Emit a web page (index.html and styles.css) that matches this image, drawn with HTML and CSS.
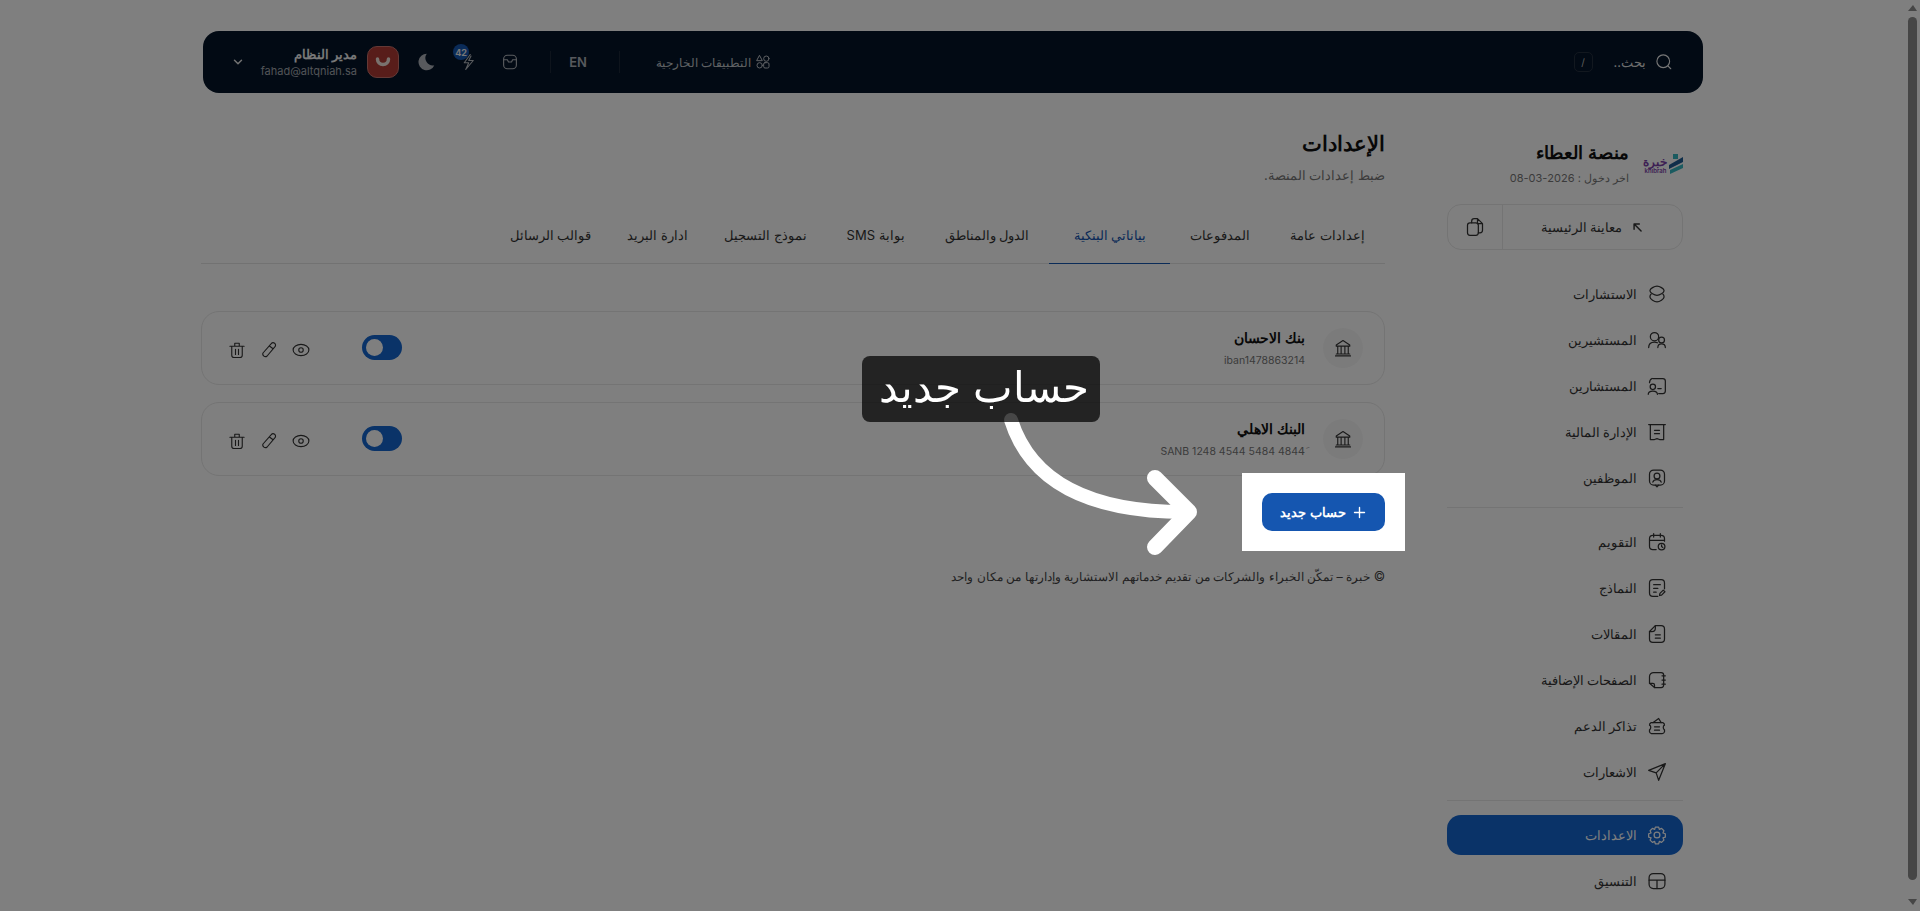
FILE: index.html
```html
<!DOCTYPE html>
<html lang="ar" dir="rtl">
<head>
  <meta charset="UTF-8">
  <meta name="viewport" content="width=device-width, initial-scale=1.0">
  <title>الإعدادات</title>
  <link rel="stylesheet" href="styles.css">
</head>
<body>

  <div class="page">
    <!-- Top bar -->
    <header class="topbar">
      <div class="search">
        <svg class="ic search-ic" viewBox="0 0 24 24"><circle cx="11" cy="11" r="8.5"/><path d="M17.5 17.5 21 21"/></svg>
        <span class="search-text">بحث..</span>
        <kbd class="search-key">/</kbd>
      </div>
      <div class="top-tools">
        <div class="apps">
          <svg class="ic apps-ic" viewBox="0 0 24 24"><circle cx="17" cy="7" r="4"/><path d="M7 2.5 11 10H3z"/><circle cx="7" cy="17" r="4"/><rect x="13" y="13" width="8" height="8" rx="2"/></svg>
          <span>التطبيقات الخارجية</span>
        </div>
        <span class="top-sep"></span>
        <span class="lang">EN</span>
        <span class="top-sep"></span>
        <svg class="ic top-ic box-ic" viewBox="0 0 24 24"><rect x="3.5" y="3" width="17" height="18" rx="5"/><path d="M3.5 9h5l1.500 3h4l1.500-3h5"/></svg>
        <div class="bolt">
          <svg class="ic top-ic" viewBox="0 0 24 24"><path d="M15 2 7 13h6l-4 9 10-12h-6l3-6"/></svg>
          <span class="bolt-badge">42</span>
        </div>
        <svg class="moon" viewBox="0 0 24 24"><path d="M13 1a11 11 0 1 0 10 15.500A10 10 0 0 1 13 1z"/></svg>
        <div class="avatar">
          <svg class="avatar-smile" viewBox="0 0 16 10"><path d="M2.500 2a5.500 5.500 0 0 0 11 0"/></svg>
        </div>
        <div class="user">
          <div class="user-name">مدير النظام</div>
          <div class="user-mail">fahad@altqniah.sa</div>
        </div>
        <svg class="ic chevron" viewBox="0 0 24 24"><path d="m6 9 6 6 6-6"/></svg>
      </div>
    </header>

    <div class="layout">
      <!-- Sidebar -->
      <aside class="sidebar">
        <div class="brand">
          <div class="logo">
            <svg class="logo-mark" viewBox="0 0 14 20"><path class="logo-teal" d="M4 0h5v5H4z"/><path class="logo-navy" d="M14 3v5L0 15v-4z"/><path class="logo-teal" d="M14 10v4L1 20v-4z"/></svg>
            <div class="logo-text"><span class="logo-ar">خبرة</span><span class="logo-en">khibrah</span></div>
          </div>
          <div>
            <div class="brand-name">منصة العطاء</div>
            <div class="brand-login">اخر دخول : 2026-03-08</div>
          </div>
        </div>

        <div class="preview">
          <div class="preview-link">
            <svg class="ic preview-arrow" viewBox="0 0 24 24"><path d="M7 7h9M7 7v9M7 7l12 12"/></svg>
            <span>معاينة الرئيسية</span>
          </div>
          <div class="preview-copy">
            <svg class="ic nav-ic" viewBox="0 0 24 24"><rect x="3" y="7" width="13" height="15" rx="3"/><path d="M8 7V5a3 3 0 0 1 3-3h4l6 6v8a3 3 0 0 1-3 3h-2M15 2v6h6"/></svg>
          </div>
        </div>

        <nav class="nav">
          <a class="nav-item"><svg class="ic nav-ic" viewBox="0 0 24 24"><path d="M12 2.500c3 0 8.500 3 8.500 5.500s-5.500 5.500-8.500 5.500S3.500 10.500 3.500 8 9 2.500 12 2.500z"/><path d="M5 12c-1 .8-1.500 2-1.500 3.500 0 2.500 5.500 6 8.500 6s8.500-3.500 8.500-6c0-1.500-.5-2.700-1.500-3.500"/></svg>الاستشارات</a>
          <a class="nav-item"><svg class="ic nav-ic" viewBox="0 0 24 24"><circle cx="9" cy="8" r="5"/><path d="M2 21c0-4 2.500-6.500 7-6.500 1.500 0 2.500.3 3.500.8"/><circle cx="17.500" cy="12" r="3.500"/><path d="M13 21c0-2.500 1.800-4.500 4.500-4.500S22 18.500 22 21"/></svg>المستشيرين</a>
          <a class="nav-item"><svg class="ic nav-ic" viewBox="0 0 24 24"><path d="M7 3h12a3 3 0 0 1 3 3v12a3 3 0 0 1-3 3h-5M3 8c0-2 1-4 3-5"/><path d="M13 15h4"/><circle cx="7" cy="13" r="3.200"/><path d="M1.500 22c0-2.500 2-4 5.500-4s5.500 1.500 5.500 4"/></svg>المستشارين</a>
          <a class="nav-item"><svg class="ic nav-ic" viewBox="0 0 24 24"><path d="M2 3h20M4 3v18h5l3-1 3 1h5V3"/><path d="M9 10h6M9 14h6"/></svg>الإدارة المالية</a>
          <a class="nav-item"><svg class="ic nav-ic" viewBox="0 0 24 24"><rect x="3" y="2.500" width="18" height="18" rx="5"/><circle cx="12" cy="9.500" r="3.500"/><path d="M7 17c.5-2 2.500-3 5-3s4.500 1 5 3M10 20.500l2 2 2-2"/></svg>الموظفين</a>
        </nav>
        <div class="nav-line"></div>
        <nav class="nav">
          <a class="nav-item"><svg class="ic nav-ic" viewBox="0 0 24 24"><path d="M11 21H7a4 4 0 0 1-4-4V8a4 4 0 0 1 4-4h10a4 4 0 0 1 4 4v3M8 2v4M16 2v4M3 10h18"/><circle cx="17.500" cy="17.500" r="4"/><path d="M17.500 15.500v2l1.500 1"/></svg>التقويم</a>
          <a class="nav-item"><svg class="ic nav-ic" viewBox="0 0 24 24"><path d="M13 22H7a4 4 0 0 1-4-4V6a4 4 0 0 1 4-4h10a4 4 0 0 1 4 4v7"/><path d="M8 8h8M8 12.500h5M8 17h3"/><path d="m15 21 .5-2.500 4-4 2 2-4 4z"/></svg>النماذج</a>
          <a class="nav-item"><svg class="ic nav-ic" viewBox="0 0 24 24"><path d="M10 2h7a4 4 0 0 1 4 4v12a4 4 0 0 1-4 4H7a4 4 0 0 1-4-4V9z"/><path d="M10 2v3a4 4 0 0 1-4 4H3M10 13h6M10 17h6"/></svg>المقالات</a>
          <a class="nav-item"><svg class="ic nav-ic" viewBox="0 0 24 24"><path d="M8 3h9a3 3 0 0 1 3 3v12a3 3 0 0 1-3 3H9l-6-5V8a5 5 0 0 1 5-5z"/><path d="M18 7h4M18 12h4M18 17h4M9 21v-3a2 2 0 0 0-2-2H3"/></svg>الصفحات الإضافية</a>
          <a class="nav-item"><svg class="ic nav-ic" viewBox="0 0 24 24"><path d="M3 11a3 3 0 0 1 2-3h14a3 3 0 0 1 2 3c-1 .5-1.500 1-1.500 2.500S20 16 21 16.500V19a3 3 0 0 1-3 2H5a3 3 0 0 1-2-2v-2.500c1-.5 1.500-1.500 1.500-3S4 11.500 3 11z"/><path d="M7 8l7-5 3 5M9 13h6M9 17h6"/></svg>تذاكر الدعم</a>
          <a class="nav-item"><svg class="ic nav-ic" viewBox="0 0 24 24"><path d="M22 2 2 10l9 3 3 9zM22 2 11 13"/></svg>الاشعارات</a>
        </nav>
        <div class="nav-line nav-line-2"></div>
        <nav class="nav">
          <a class="nav-item nav-active"><svg class="ic nav-ic" viewBox="0 0 24 24"><circle cx="12" cy="12" r="3.500"/><path d="M10 2.500h4l.8 2.800 2.700-1.200 2.800 2.800-1.200 2.700 2.900.9v4l-2.900.9 1.200 2.700-2.800 2.800-2.700-1.200-.8 2.800h-4l-.8-2.800-2.700 1.200-2.800-2.800 1.200-2.700-2.900-.9v-4l2.900-.9-1.200-2.700 2.800-2.800 2.700 1.200z"/></svg>الاعدادات</a>
          <a class="nav-item"><svg class="ic nav-ic" viewBox="0 0 24 24"><rect x="2.500" y="3" width="19" height="18" rx="5"/><path d="M2.500 11h19M12 11v10"/></svg>التنسيق</a>
        </nav>
      </aside>

      <!-- Settings -->
      <main class="content">
        <h1 class="page-title">الإعدادات</h1>
        <p class="page-sub">ضبط إعدادات المنصة.</p>

        <div class="tabs">
          <a class="tab">إعدادات عامة</a>
          <a class="tab">المدفوعات</a>
          <a class="tab tab-active">بياناتي البنكية</a>
          <a class="tab">الدول والمناطق</a>
          <a class="tab">بوابة SMS</a>
          <a class="tab">نموذج التسجيل</a>
          <a class="tab tab-tight">ادارة البريد</a>
          <a class="tab">قوالب الرسائل</a>
        </div>

        <div class="bank-list">
          <div class="bank-card">
            <div class="bank-info">
              <span class="bank-icon"><svg class="ic bank-ic" viewBox="0 0 24 24"><path d="M12 2 3 8v1.500h18V8zM5 20V9.500M9.500 20V9.500M14.500 20V9.500M19 20V9.500M3 20h18M2 22.500h20"/></svg></span>
              <div>
                <div class="bank-name">بنك الاحسان</div>
                <div class="bank-number">iban1478863214</div>
              </div>
            </div>
            <div class="bank-actions">
              <span class="toggle"><span class="toggle-knob"></span></span>
              <svg class="ic act-ic eye-ic" viewBox="0 0 24 24"><ellipse cx="12" cy="12" rx="10.500" ry="7.500"/><circle cx="12" cy="12" r="3"/></svg>
              <svg class="ic act-ic" viewBox="0 0 24 24"><path d="M15 3.500a3.200 3.200 0 0 1 5 4L9.500 20a3.500 3.500 0 0 1-5.500-4zM13 7l4 3"/></svg>
              <svg class="ic act-ic" viewBox="0 0 24 24"><path d="M2.500 7h19M9 7V3h6v4M5 7v12a3 3 0 0 0 3 3h8a3 3 0 0 0 3-3V7M10 11v7M14 11v7"/></svg>
            </div>
          </div>
          <div class="bank-card">
            <div class="bank-info">
              <span class="bank-icon"><svg class="ic bank-ic" viewBox="0 0 24 24"><path d="M12 2 3 8v1.500h18V8zM5 20V9.500M9.500 20V9.500M14.500 20V9.500M19 20V9.500M3 20h18M2 22.500h20"/></svg></span>
              <div>
                <div class="bank-name">البنك الاهلي</div>
                <div class="bank-number">SANB 1248 4544 5484 4844َ</div>
              </div>
            </div>
            <div class="bank-actions">
              <span class="toggle"><span class="toggle-knob"></span></span>
              <svg class="ic act-ic eye-ic" viewBox="0 0 24 24"><ellipse cx="12" cy="12" rx="10.500" ry="7.500"/><circle cx="12" cy="12" r="3"/></svg>
              <svg class="ic act-ic" viewBox="0 0 24 24"><path d="M15 3.500a3.200 3.200 0 0 1 5 4L9.500 20a3.500 3.500 0 0 1-5.500-4zM13 7l4 3"/></svg>
              <svg class="ic act-ic" viewBox="0 0 24 24"><path d="M2.500 7h19M9 7V3h6v4M5 7v12a3 3 0 0 0 3 3h8a3 3 0 0 0 3-3V7M10 11v7M14 11v7"/></svg>
            </div>
          </div>
        </div>

        <button class="new-account">
          <svg class="ic plus-ic" viewBox="0 0 24 24"><path d="M12 4v16M4 12h16"/></svg>
          حساب جديد
        </button>

        <p class="footer-note">© خبرة – تمكّن الخبراء والشركات من تقديم خدماتهم الاستشارية وإدارتها من مكان واحد</p>
      </main>
    </div>
  </div>

  <!-- Scrollbar of the window -->
  <div class="scrollbar">
    <span class="scroll-up"></span>
    <span class="scroll-thumb"></span>
    <span class="scroll-down"></span>
  </div>

  <!-- Tour overlay -->
  <div class="overlay"></div>
  <svg class="tour-arrow" viewBox="0 0 1920 911">
    <path d="M1011 420Q1040 512 1185 512"/>
    <path class="tour-head" d="M1155 478 1189 512 1155 547"/>
  </svg>
  <div class="tour-label">حساب جديد</div>

</body>
</html>
```

FILE: styles.css
```css
* {
  margin: 0;
  padding: 0;
  box-sizing: border-box;
}
html, body {
  height: 100%;
  overflow: hidden;
}
body {
  font-family: Inter, 'Noto Sans', sans-serif;
  background-color: white;
  color: #333;
}
a {
  color: inherit;
  text-decoration: none;
}
.ic {
  fill: none;
  stroke: currentColor;
  stroke-width: 1.5;
  stroke-linecap: round;
  stroke-linejoin: round;
  flex-shrink: 0;
}
.page {
  padding: 31px 217px 0 205px;
}

/* top bar */
.topbar {
  height: 62px;
  background-color: #041428;
  border-radius: 16px;
  display: flex;
  align-items: center;
  justify-content: space-between;
  padding: 0 30px 0 28px;
  margin-left: -2px;
  color: #fff;
}
.search {
  display: flex;
  align-items: center;
}
.search-ic {
  width: 18px;
  height: 18px;
  color: #eee;
}
.search-text {
  font-size: 13px;
  color: #ddd;
  margin-right: 9px;
}
.search-key {
  width: 19px;
  height: 20px;
  margin-right: 21px;
  border: 1px solid #25303f;
  border-radius: 5px;
  font-size: 10px;
  font-family: Inter, sans-serif;
  display: flex;
  align-items: center;
  justify-content: center;
  color: #bbb;
}
.top-tools {
  display: flex;
  align-items: center;
}
.apps {
  display: flex;
  align-items: center;
  gap: 4px;
  font-size: 12px;
  color: #bfc3c9;
  width: 116px;
  white-space: nowrap;
}
.apps-ic {
  width: 16px;
  height: 16px;
}
.top-sep {
  width: 1px;
  height: 22px;
  background-color: #1c2838;
  margin-right: 35px;
}
.lang {
  font-size: 13px;
  font-weight: 600;
  color: #aeb3ba;
  width: 20px;
  margin-right: 31px;
  text-align: center;
}
.top-ic {
  width: 18px;
  height: 18px;
  color: #b5b9bf;
}
.lang + .top-sep {
  margin-right: 17px;
}
.box-ic {
  margin-right: 31px;
}
.bolt {
  position: relative;
  height: 18px;
  margin-right: 24px;
}
.bolt-badge {
  position: absolute;
  top: -9px;
  right: 8px;
  width: 16px;
  height: 16px;
  border-radius: 50%;
  background-color: #1556b0;
  color: #eee;
  font-size: 9px;
  font-weight: 700;
  display: flex;
  align-items: center;
  justify-content: center;
}
.moon {
  width: 18px;
  height: 18px;
  fill: #aeb3ba;
  margin-right: 24px;
}
.avatar {
  width: 32px;
  height: 32px;
  background-color: #b03a34;
  border: 1px solid #c9726c;
  border-radius: 10px;
  margin-right: 18px;
  display: flex;
  align-items: center;
  justify-content: center;
}
.avatar-smile {
  width: 16px;
  height: 10px;
  fill: none;
  stroke: #f2e4dc;
  stroke-width: 3.5;
  stroke-linecap: round;
}
.user {
  width: 97px;
  margin-right: 10px;
  white-space: nowrap;
}
.user-name {
  font-size: 13px;
  font-weight: 600;
  line-height: 18px;
  color: #f0f0f0;
}
.user-mail {
  font-size: 11px;
  line-height: 16px;
  color: #a5a9af;
}
.chevron {
  width: 14px;
  height: 14px;
  stroke-width: 2.5;
  color: #e5e5e5;
  margin-right: 15px;
}

/* layout */
.layout {
  display: flex;
  justify-content: space-between;
  margin-top: 38px;
  padding-right: 20px;
  margin-left: -4px;
  gap: 62px;
}
.sidebar {
  width: 236px;
  flex-shrink: 0;
  padding-top: 10px;
}
.brand {
  display: flex;
  align-items: center;
  gap: 15px;
  height: 46px;
}
.logo {
  width: 39px;
  display: flex;
  align-items: center;
  gap: 2px;
  flex-shrink: 0;
}
.logo-mark {
  width: 14px;
  height: 20px;
}
.logo-teal {
  fill: #36b7c0;
}
.logo-navy {
  fill: #1f5d94;
}
.logo-text {
  display: flex;
  flex-direction: column;
  color: #7a3fa8;
  line-height: 1;
  width: 23px;
}
.logo-ar {
  font-size: 12px;
  font-weight: 700;
  line-height: 13px;
  text-align: center;
}
.logo-en {
  font-size: 6px;
  font-weight: 600;
  text-align: center;
}
.brand-name {
  font-size: 18px;
  font-weight: 600;
  line-height: 24px;
  color: #111;
  white-space: nowrap;
}
.brand-login {
  font-size: 11px;
  line-height: 18px;
  margin-top: 4px;
  color: #777;
  white-space: nowrap;
}
.preview {
  margin-top: 17px;
  height: 46px;
  border: 1px solid #e8e8e8;
  border-radius: 14px;
  display: flex;
  font-size: 13px;
  font-weight: 500;
}
.preview-link {
  flex: 1;
  display: flex;
  align-items: center;
  justify-content: center;
  gap: 8px;
}
.preview-arrow {
  width: 14px;
  height: 14px;
  stroke-width: 2.5;
}
.preview-copy {
  width: 55px;
  border-right: 1px solid #e8e8e8;
  display: flex;
  align-items: center;
  justify-content: center;
}
.nav {
  display: flex;
  flex-direction: column;
  gap: 6px;
  margin-top: 14px;
}
.preview + .nav {
  margin-top: 24px;
}
.nav-item {
  height: 40px;
  display: flex;
  align-items: center;
  gap: 10px;
  padding-right: 16px;
  font-size: 13px;
  font-weight: 500;
  border-radius: 14px;
}
.nav-ic {
  width: 20px;
  height: 20px;
}
.nav-active {
  background-color: #1466d0;
  color: white;
}
.nav-line {
  height: 1px;
  background-color: #e8e8e8;
  margin-top: 9px;
}
.nav-line-2 {
  margin-top: 8px;
}

/* settings */
.content {
  width: 1184px;
}
.page-title {
  font-size: 21px;
  font-weight: 600;
  line-height: 26px;
  color: #111;
}
.page-sub {
  font-size: 13px;
  line-height: 20px;
  margin-top: 8px;
  color: #777;
}
.tabs {
  margin-top: 29px;
  height: 50px;
  display: flex;
  border-bottom: 1px solid #e5e5e5;
}
.tab {
  height: 50px;
  padding: 11px 20px 0;
  font-size: 13px;
  line-height: 20px;
  white-space: nowrap;
  color: #333;
  text-align: center;
}
.tab-active {
  min-width: 121px;
  color: #1556b0;
  border-bottom: 1px solid #1556b0;
}
.tab-tight {
  padding: 11px 16px 0;
}
.bank-list {
  margin-top: 47px;
  display: flex;
  flex-direction: column;
  gap: 17px;
}
.bank-card {
  height: 74px;
  border: 1px solid #e8e8e8;
  border-radius: 18px;
  padding: 0 21px 0 26px;
  display: flex;
  align-items: center;
  justify-content: space-between;
}
.bank-info {
  display: flex;
  align-items: center;
  gap: 18px;
}
.bank-icon {
  width: 40px;
  height: 40px;
  border-radius: 50%;
  background-color: #f7f7f7;
  display: flex;
  align-items: center;
  justify-content: center;
}
.bank-ic {
  width: 18px;
  height: 18px;
}
.bank-name {
  font-size: 14px;
  font-weight: 600;
  line-height: 20px;
  color: #111;
}
.bank-number {
  font-size: 10.5px;
  line-height: 16px;
  margin-top: 5px;
  color: #777;
}
.bank-actions {
  display: flex;
  align-items: center;
  gap: 14px;
}
.toggle {
  width: 40px;
  height: 25px;
  border-radius: 13px;
  background-color: #1466d0;
  margin-left: 38px;
  margin-top: -1px;
  padding: 4px;
  display: flex;
  justify-content: flex-end;
}
.toggle-knob {
  width: 17px;
  height: 17px;
  border-radius: 50%;
  background-color: white;
}
.act-ic {
  width: 18px;
  height: 18px;
  margin-top: 4px;
}
.new-account {
  position: relative;
  z-index: 11;
  display: flex;
  align-items: center;
  justify-content: center;
  gap: 6px;
  width: 123px;
  height: 38px;
  margin-top: 17px;
  border: none;
  border-radius: 10px;
  background-color: #1556b0;
  color: white;
  font-family: inherit;
  font-size: 13px;
  font-weight: 600;
}
.new-account::before {
  content: "";
  position: absolute;
  inset: -20px;
  background-color: white;
  z-index: -1;
}
.new-account::after {
  content: "";
  position: absolute;
  inset: 0;
  background-color: #1556b0;
  border-radius: 10px;
  z-index: -1;
}
.plus-ic {
  width: 15px;
  height: 15px;
  stroke-width: 2.2;
}
.footer-note {
  margin-top: 36px;
  font-size: 12.4px;
  line-height: 20px;
  color: #444;
}

/* window scrollbar */
.scrollbar {
  position: fixed;
  top: 0;
  right: 0;
  bottom: 0;
  width: 12px;
}
.scroll-thumb {
  position: absolute;
  top: 17px;
  bottom: 31px;
  left: 0;
  width: 9px;
  border-radius: 5px;
  background-color: #8c8c8c;
}
.scroll-up, .scroll-down {
  position: absolute;
  left: 0;
  border-left: 5px solid transparent;
  border-right: 4px solid transparent;
}
.scroll-up {
  top: 5px;
  border-bottom: 6px solid #8c8c8c;
}
.scroll-down {
  bottom: 6px;
  border-top: 6px solid #8c8c8c;
}

/* tour */
.overlay {
  position: fixed;
  inset: 0;
  background-color: rgba(0, 0, 0, 0.5);
  z-index: 10;
}
.tour-arrow {
  position: fixed;
  top: 0;
  left: 0;
  width: 1920px;
  height: 911px;
  z-index: 12;
  fill: none;
  stroke: white;
  stroke-width: 14;
  stroke-linecap: round;
  stroke-linejoin: round;
}
.tour-head {
  stroke-width: 16;
}
.tour-label {
  position: fixed;
  left: 862px;
  top: 356px;
  width: 238px;
  height: 66px;
  padding-left: 6px;
  z-index: 13;
  background-color: rgba(0, 0, 0, 0.72);
  border-radius: 8px;
  color: white;
  font-size: 42px;
  font-weight: 300;
  line-height: 62px;
  text-align: center;
  white-space: nowrap;
}
```
